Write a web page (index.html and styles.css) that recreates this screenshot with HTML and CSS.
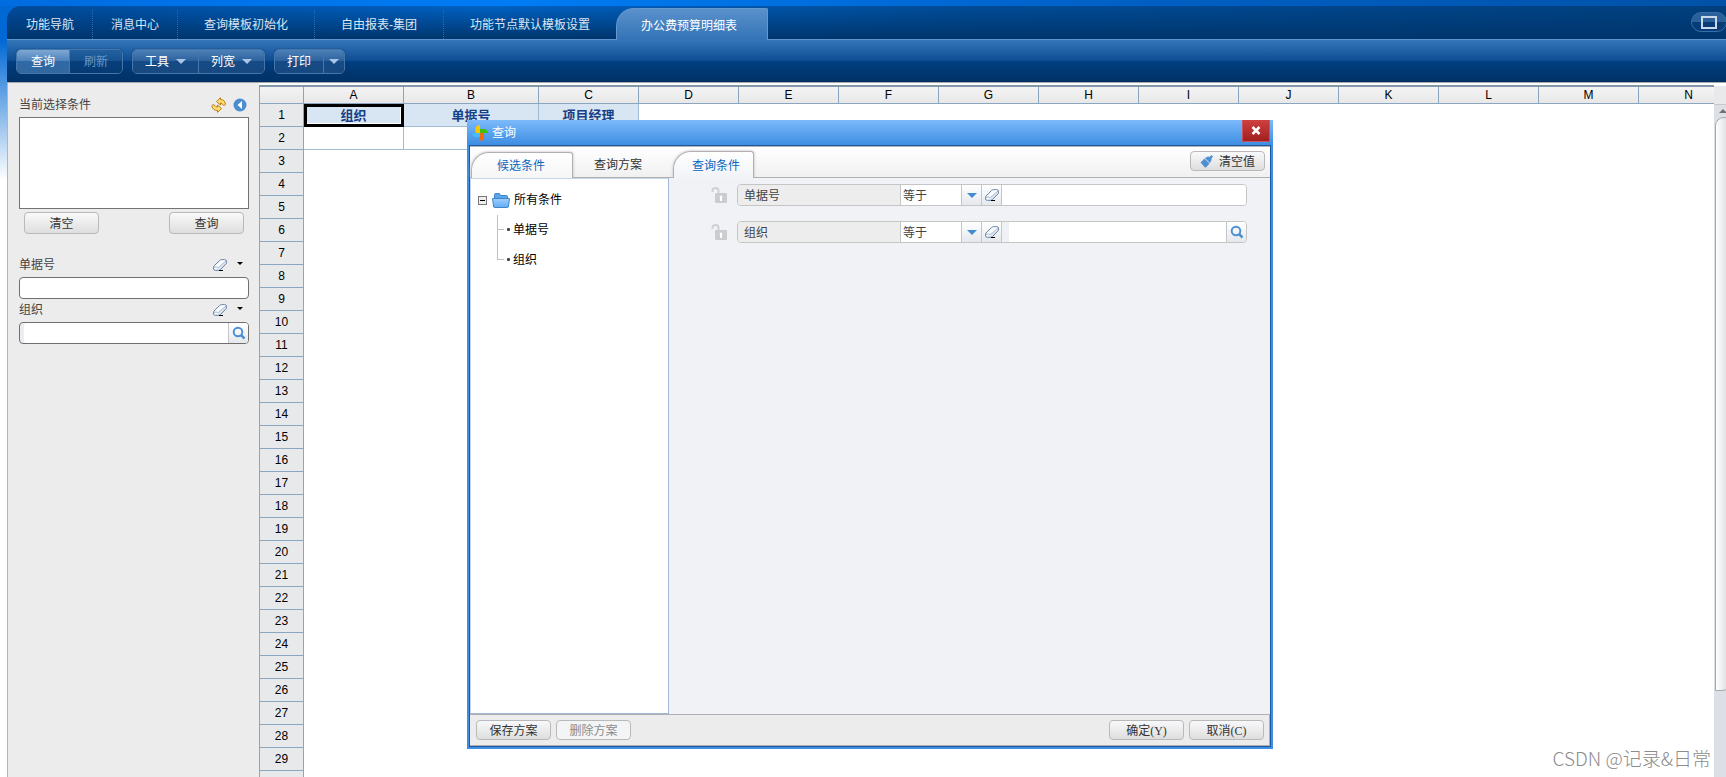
FILE: index.html
```html
<!DOCTYPE html>
<html lang="zh-CN">
<head>
<meta charset="utf-8">
<title>办公费预算明细表</title>
<link rel="stylesheet" href="styles.css">
</head>
<body>
<svg class="defs" aria-hidden="true">
  <defs>
    <linearGradient id="folder-fill" x1="0" y1="0" x2="0" y2="1"><stop offset="0" stop-color="#9fcfff"/><stop offset="1" stop-color="#62acf5"/></linearGradient>
    <linearGradient id="eraser-fill" x1="0" y1="0" x2="1" y2="1"><stop offset="0" stop-color="#c3d3e8"/><stop offset=".45" stop-color="#fff"/><stop offset="1" stop-color="#9db2cd"/></linearGradient>
    <symbol id="eraser" viewBox="0 0 14 12">
      <path d="M1 7 6.500 1.500Q7.500.6 8.500.6H11.500Q13.400.6 13.400 2V4.500L7.500 10.500Q6.500 11.400 5.500 11.400H2.500Q.6 11.400.6 10V8Z" fill="url(#eraser-fill)" stroke="#6c86a8"/>
      <path d="M1 8.500Q3 7.500 5.500 8.500L13 2" fill="none" stroke="#a9bcd6"/>
      <path d="M6 11.500H10" stroke="#000"/>
    </symbol>
    <symbol id="search" viewBox="0 0 14 14">
      <circle cx="6" cy="6" r="4.300" fill="none" stroke="#4f90d3" stroke-width="2"/>
      <path d="M9 9 12.500 12.500" stroke="#4f90d3" stroke-width="2.500"/>
    </symbol>
    <symbol id="lock" viewBox="0 0 16 16">
      <path d="M1.500 5V3.500A3 2.500 0 0 1 7.500 3.500V6" fill="none" stroke="#d0d1d2" stroke-width="2"/>
      <rect x="4" y="6" width="12" height="10" rx="1" fill="#cbcccd"/>
      <path d="M10 8.500a1.500 1.500 0 0 1 1 2.500V14H9V11A1.500 1.500 0 0 1 10 8.500Z" fill="#fff"/>
    </symbol>
  </defs>
</svg>
<div class="app">
  <nav class="tabs">
    <a class="tab" href="#">功能导航</a>
    <a class="tab" href="#">消息中心</a>
    <a class="tab tab-wide" href="#">查询模板初始化</a>
    <a class="tab tab-wide" href="#">自由报表-集团</a>
    <a class="tab tab-wide tab-last" href="#">功能节点默认模板设置</a>
    <a class="tab tab-active" href="#">办公费预算明细表</a>
    <button class="max-btn" aria-label="最大化"></button>
  </nav>
  <div class="toolbar">
    <div class="btn-group">
      <button class="tool tool-primary">查询</button>
      <button class="tool tool-primary" disabled>刷新</button>
    </div>
    <div class="btn-group">
      <button class="tool">工具<i class="caret"></i></button>
      <button class="tool">列宽<i class="caret"></i></button>
    </div>
    <div class="btn-group">
      <button class="tool">打印</button>
      <button class="tool tool-caret" aria-label="更多打印"><i class="caret"></i></button>
    </div>
  </div>
  <div class="main">
    <aside class="sidebar">
      <div class="side-head">
        <label for="current">当前选择条件</label>
        <svg width="16" height="16" viewBox="0 0 16 16"><g fill="#ffdc70" stroke="#bd7f1c" stroke-linejoin="round"><path d="M5.500 4.500 9.500.7V2.500Q14 2.500 14.500 7.500L13 8.500 11.500 7.500Q11.500 6 9.500 6V8Z"/><path d="M10.500 11.500 6.500 15.300V13.500Q2 13.500.8 9L2 7.500 4 8.500Q4.500 10 6.500 10V8Z"/></g></svg>
        <svg width="14" height="14" viewBox="0 0 14 14"><circle cx="7" cy="7" r="6.500" fill="#4c8dd0"/><path d="M9 3V11L4.500 7Z" fill="#fff"/></svg>
      </div>
      <textarea id="current" class="current"></textarea>
      <div class="side-actions">
        <button class="btn btn-side">清空</button>
        <button class="btn btn-side">查询</button>
      </div>
      <div class="field">
        <label for="doc-no">单据号</label>
        <svg width="14" height="12"><use href="#eraser"/></svg>
        <i class="mini-caret"></i>
      </div>
      <div class="box"><input id="doc-no" type="text"></div>
      <div class="field">
        <label for="org">组织</label>
        <svg width="14" height="12"><use href="#eraser"/></svg>
        <i class="mini-caret"></i>
      </div>
      <div class="box box-search"><input id="org" type="text"><button class="cell" aria-label="搜索"><svg width="14" height="14"><use href="#search"/></svg></button></div>
    </aside>
    <div class="sheet">
      <div class="sheet-view">
        <table class="grid">
          <colgroup><col class="c-head"><col><col class="c-b"><col><col><col><col><col><col><col><col><col><col><col><col></colgroup>
          <thead><tr><th></th><th>A</th><th>B</th><th>C</th><th>D</th><th>E</th><th>F</th><th>G</th><th>H</th><th>I</th><th>J</th><th>K</th><th>L</th><th>M</th><th>N</th></tr></thead>
          <tbody>
            <tr><th>1</th><td class="title selected">组织</td><td class="title">单据号</td><td class="title">项目经理</td></tr>
            <tr><th>2</th><td class="used"></td><td class="used"></td><td class="used"></td></tr>
            <tr><th>3</th></tr><tr><th>4</th></tr><tr><th>5</th></tr><tr><th>6</th></tr><tr><th>7</th></tr><tr><th>8</th></tr><tr><th>9</th></tr><tr><th>10</th></tr>
            <tr><th>11</th></tr><tr><th>12</th></tr><tr><th>13</th></tr><tr><th>14</th></tr><tr><th>15</th></tr><tr><th>16</th></tr><tr><th>17</th></tr><tr><th>18</th></tr><tr><th>19</th></tr><tr><th>20</th></tr>
            <tr><th>21</th></tr><tr><th>22</th></tr><tr><th>23</th></tr><tr><th>24</th></tr><tr><th>25</th></tr><tr><th>26</th></tr><tr><th>27</th></tr><tr><th>28</th></tr><tr><th>29</th></tr><tr><th></th></tr>
          </tbody>
        </table>
      </div>
      <div class="scroll">
        <div class="scroll-corner"></div>
        <div class="scroll-up"><i></i></div>
        <div class="scroll-track"><div class="thumb"></div></div>
      </div>
    </div>
  </div>
</div>

<section class="dialog" role="dialog" aria-labelledby="dlg-title">
  <header class="dlg-title">
    <svg width="16" height="16" viewBox="0 0 16 16"><path d="M3.500 8V3Q4 .5 8 0V8Z" fill="#fbc600"/><path d="M8 4H13Q15.500 5 16 8H8Z" fill="#3cc00a"/><path d="M8 8H12V13Q11 15.500 8 16Z" fill="#f26a0b"/><path d="M0 8H8V12H3Q.5 11.500 0 8Z" fill="#46bcff"/></svg>
    <span id="dlg-title">查询</span>
    <button class="close" aria-label="关闭"><svg width="10" height="9" viewBox="0 0 10 9"><path d="M1.500 1 8.500 8M8.500 1 1.500 8" stroke="#fff" stroke-width="2.500"/></svg></button>
  </header>
  <div class="dlg-frame">
    <div class="dlg-tabs">
      <button class="dtab dtab-on">候选条件</button>
      <button class="dtab">查询方案</button>
      <button class="dtab dtab-on dtab-right">查询条件</button>
      <button class="btn btn-clear"><svg width="13" height="13" viewBox="0 0 13 13"><path d="M.5 7.500 4.500 3.500 9.500 8.500 6 12.500H5Z" fill="#4d8fd3"/><path d="M5 3 8 1.500 9.500 2 11.500 0 13 1.500 11.500 3.500V5L10 8Z" fill="#4d8fd3"/></svg>清空值</button>
    </div>
    <div class="dlg-body">
      <div class="tree">
        <div class="node root"><i class="toggle"></i>
          <svg width="18" height="15" viewBox="0 0 18 15"><path d="M2.500 7V1.500Q2.500.5 3.500.5H7.500L8.500 2.500H14.500Q15.500 2.500 15.500 3.500V7" fill="#5ba5e8" stroke="#3d86ca"/><path d="M.5 5.500H17.500L16.500 13Q16.500 14.500 15.500 14.500H2.500Q1.500 14.500 1.500 13Z" fill="url(#folder-fill)" stroke="#3d86ca"/></svg>
          <span>所有条件</span></div>
        <div class="branch">
          <div class="node leaf">单据号</div>
          <div class="node leaf leaf-last">组织</div>
        </div>
      </div>
      <div class="conds">
        <div class="cond">
          <svg width="16" height="16"><use href="#lock"/></svg>
          <div class="cond-box">
            <label class="cond-name" for="v1">单据号</label>
            <select class="op" aria-label="单据号比较"><option>等于</option></select>
            <span class="cell"><i class="down"></i></span>
            <button class="cell" aria-label="清除"><svg width="14" height="12"><use href="#eraser"/></svg></button>
            <input id="v1" type="text" class="value">
          </div>
        </div>
        <div class="cond">
          <svg width="16" height="16"><use href="#lock"/></svg>
          <div class="cond-box">
            <label class="cond-name" for="v2">组织</label>
            <select class="op" aria-label="组织比较"><option>等于</option></select>
            <span class="cell"><i class="down"></i></span>
            <button class="cell" aria-label="清除"><svg width="14" height="12"><use href="#eraser"/></svg></button>
            <input id="v2" type="text" class="value value-ref">
            <button class="cell" aria-label="搜索"><svg width="14" height="14"><use href="#search"/></svg></button>
          </div>
        </div>
      </div>
    </div>
    <footer class="dlg-foot">
      <button class="btn">保存方案</button>
      <button class="btn" disabled>删除方案</button>
      <button class="btn btn-ok">确定<span class="key">(Y)</span></button>
      <button class="btn">取消<span class="key">(C)</span></button>
    </footer>
  </div>
</section>
<div class="watermark">CSDN @记录&amp;日常</div>
</body>
</html>
```

FILE: styles.css
```css
* { box-sizing: border-box; }
body {
  margin: 0;
  height: 100vh;
  overflow: hidden;
  position: relative;
  background: linear-gradient(rgba(255,255,255,0) 40px, #fff 180px), linear-gradient(90deg, #0068d4, #007cf5 30%, #0056ad 75%, #0052a8);
  font: 12px/16px "Liberation Sans", "Noto Sans CJK SC", sans-serif;
  color: #444;
}
button, input, textarea, select { font: inherit; color: inherit; margin: 0; padding: 0; border: 0; background: none; outline: 0; }
svg { display: block; flex: none; }
.defs { position: absolute; width: 0; height: 0; }
body::before { content: ""; display: block; height: 6px; background: linear-gradient(90deg, #006ce0, #007cf5 30%, #0060c6 65%, #0052a8); }

.app { height: calc(100vh - 6px); margin-left: 7px; display: flex; flex-direction: column; }
.tabs {
  flex: none; height: 34px; padding-left: 1px; display: flex; align-items: flex-end;
  border-top-left-radius: 14px;
  border-bottom: 1px solid #5b96d2;
  background: linear-gradient(rgba(0,48,100,0), #00356c), linear-gradient(90deg, #004b9c, #0062c4 28%, #004c98 55%, #003f7e);
}
.tab { flex: none; padding: 0 18px; height: 29px; line-height: 30px; color: #dbe6f2; text-decoration: none; border-right: 1px dotted #2d6cb0; }
.tab-wide { padding: 0 26px; }
.tab-last { border-right: 0; }
.tab-active {
  height: 32px; line-height: 34px; padding: 0 30px 0 24px; margin-bottom: -1px;
  color: #fff; border: 1px solid #6299d1; border-bottom: 0; border-radius: 18px 2px 0 0;
  background: linear-gradient(#5a91cb, #3373b6);
}
.max-btn { margin: 0 -1px 7px auto; width: 36px; height: 20px; border: 1px solid #366fa9; border-radius: 10px; background: linear-gradient(#2b609a 50%, #073c76 50%); display: flex; align-items: center; justify-content: center; }
.max-btn::before { content: ""; width: 12px; height: 9px; border: 2px solid #c9d8e8; }

.toolbar {
  flex: none; height: 42px; padding: 9px 9px 8px; display: flex; gap: 9px;
  background: linear-gradient(#3475b8, #0d4c92 50%, #003f81 50%, #003164);
}
.btn-group { display: flex; border: 1px solid #4677ab; border-radius: 5px; overflow: hidden; height: 25px; box-shadow: 0 0 1px #00244e; }
.tool { display: flex; align-items: center; gap: 7px; padding: 0 12px; color: #fff; background: linear-gradient(#4c80b7, #2b609c 50%, #154b87 50%, #18497f); }
.tool + .tool { border-left: 1px solid #4677ab; }
.tool-primary { padding: 0 14px; background: linear-gradient(#7fa8d4, #4b80b9 50%, #2f69a6 50%, #33689f); }
.tool:disabled { color: #6c96c2; background: linear-gradient(#22609f, #15518f 50%, #063f7c 50%, #063b72); }
.tool-caret { padding: 0 5px; }
.caret { border: 5px solid transparent; border-top-color: #a9c6e6; border-bottom: 0; }

.main { flex: 1; min-height: 0; display: flex; border-top: 1px solid #a9a9a9; background: #fff; }
.sidebar { flex: none; width: 252px; padding: 12px 10px 0 11px; background: #ececec; border-left: 1px solid #b3b5b8; }
.side-head { display: flex; align-items: center; gap: 6px; height: 20px; padding-right: 2px; }
.side-head label, .field label { flex: 1; }
.current { display: block; width: 100%; height: 92px; margin-top: 2px; border: 1px solid #737373; background: #fff; resize: none; }
.side-actions { display: flex; justify-content: space-between; padding: 3px 5px 0; }
.btn { width: 75px; height: 20px; padding-top: 1px; color: #333; border: 1px solid #b9b9b9; border-radius: 4px; background: linear-gradient(#f8f9fb, #e9e9e9 60%, #dedede); white-space: nowrap; }
.btn-side { height: 22px; padding-top: 2px; }
.field { display: flex; align-items: center; height: 23px; padding: 0 6px 2px 0; }
.side-actions + .field { margin-top: 20px; }
.field svg { margin-right: 10px; }
.mini-caret { margin-bottom: 2px; border: 3px solid transparent; border-top-color: #000; border-bottom: 0; }
.box { display: flex; height: 22px; border: 1px solid #6f6f6f; border-radius: 4px; background: #fff; overflow: hidden; }
.box input { flex: 1; min-width: 0; padding: 0 4px; }
.box-search { box-shadow: inset 4px 0 #ebedf3; }
.cell { flex: none; width: 20px; display: flex; align-items: center; justify-content: center; border-left: 1px solid #c4c6c9; background: linear-gradient(#fff, #e5e8ec); }

.sheet { flex: 1; min-width: 0; display: flex; padding-top: 2px; }
.sheet-view { flex: 1; min-width: 0; overflow: hidden; border-top: 2px solid #8298aa; }
.grid { table-layout: fixed; width: 1480px; border-collapse: separate; border-spacing: 0; color: #000; }
.grid col { width: 100px; }
.grid .c-head { width: 45px; }
.grid .c-b { width: 135px; }
.grid th { height: 23px; padding: 0; font-weight: normal; text-align: center; background: #e8e9eb; border: 1px solid #8aa6c1; border-width: 0 1px 1px 0; }
.grid th:first-child { border-left-width: 1px; }
.grid thead th { height: 17px; line-height: 14px; background: linear-gradient(#f4f4f4, #e8e8e8); }
.grid td { padding: 0; border: 1px solid #a3bad3; border-width: 0 1px 1px 0; text-align: center; }
.grid .title { padding-top: 2px; background: #d8e5f2; color: #163f87; font-size: 13px; font-weight: bold; }
.grid .selected { outline: 3px solid #000; outline-offset: -3px; box-shadow: inset 0 0 0 3px #fff; }
.scroll { flex: none; width: 12px; margin-top: 1px; display: flex; flex-direction: column; background: #dce0e6; overflow: hidden; }
.scroll-corner { height: 19px; flex: none; background: #e9e9eb; border-bottom: 1px solid #c7c8cd; }
.scroll-up { height: 12px; flex: none; padding: 4px 0 0 5px; }
.scroll-up i { display: block; width: 0; border: 4px solid transparent; border-bottom-color: #707070; border-top: 0; }
.scroll-track { flex: 1; }
.thumb { width: 16px; height: 87%; margin-left: 1px; border: 1px solid #a5a8ae; border-radius: 10px 8px 10px 0; background: linear-gradient(90deg, #fff, #d6d8da); }

.dialog { position: absolute; left: 467px; top: 120px; width: 806px; height: 629px; display: flex; flex-direction: column; padding: 0 2px 2px; background: #3d8ee5; color: #333; }
.dlg-title { flex: none; height: 25px; margin: 0 -2px; padding: 0 3px 0 5px; display: flex; align-items: center; gap: 4px; color: #fff; background: linear-gradient(#7cbafb, #3d8de2); }
.close { align-self: flex-start; margin-left: auto; width: 28px; height: 22px; display: flex; align-items: center; justify-content: center; background: linear-gradient(#d04040, #a11f1f); border: 1px solid #c65561; border-top: 0; }
.dlg-frame { flex: 1; min-height: 0; display: flex; flex-direction: column; border: 1px solid #20599b; }
.dlg-tabs { flex: none; height: 32px; padding-left: 1px; display: flex; align-items: flex-end; background: linear-gradient(#fff, #f0f0f0); border-top: 1px solid #aeb3b8; border-bottom: 1px solid #b0b0b0; }
.dtab { height: 26px; padding: 2px 21px 0; }
.dtab-on { margin-bottom: -1px; padding: 0 27px 0 25px; color: #0a67bd; background: linear-gradient(#fff, #f6f6f6); border: 1px solid #b0b0b0; border-bottom: 0; border-radius: 18px 3px 0 0; box-shadow: 0 0 3px #bbb; clip-path: inset(-3px -3px 0 -3px); }
.dtab-right { margin-left: 10px; height: 27px; padding: 1px 13px 0 18px; background: linear-gradient(#fff, #f1f3f7); }
.btn-clear { margin: 0 5px 6px auto; display: flex; align-items: center; justify-content: center; gap: 6px; }
.dlg-body { flex: 1; min-height: 0; display: flex; background: #f0f2f6; }
.tree { flex: none; width: 199px; padding: 6px 7px; background: #fff; color: #000; border: 1px solid #9fb7d5; border-left-color: #c6d6ea; border-top-color: #c6d6ea; }
.node { display: flex; align-items: center; height: 30px; }
.toggle { width: 9px; height: 9px; margin-right: 5px; border: 1px solid #777; background: linear-gradient(#000, #000) center / 5px 1px no-repeat #eee; }
.root span { margin-left: 4px; }
.branch { margin-left: 19px; }
.leaf { position: relative; padding-left: 16px; }
.leaf::before { content: ""; position: absolute; left: 0; top: 0; width: 6px; height: 100%; border-left: 1px solid #c0c0c0; background: linear-gradient(#c0c0c0, #c0c0c0) 0 14px / 6px 1px no-repeat; }
.leaf-last::before { height: 15px; }
.leaf::after { content: ""; position: absolute; left: 10px; top: 13px; width: 3px; height: 3px; border-radius: 1px; background: #444; }
.conds { flex: 1; min-width: 0; padding: 6px 23px 0 42px; display: flex; flex-direction: column; gap: 15px; }
.cond { display: flex; align-items: center; gap: 10px; }
.cond-box { flex: 1; min-width: 0; height: 22px; display: flex; border: 1px solid #c5c5c6; border-radius: 4px; overflow: hidden; color: #444; }
.cond-name { width: 162px; padding-left: 6px; line-height: 23px; background: #ededee; }
.op { width: 61px; padding: 2px 0 0 2px; border-left: 1px solid #c4c6c9; background: #fff; appearance: none; }
.down { border: 5px solid transparent; border-top-color: #438bd1; border-bottom: 0; }
.value { flex: 1; min-width: 0; padding: 0 4px; background: #fff; border-left: 1px solid #c4c6c9; }
.value-ref { box-shadow: inset 7px 0 #f0f1f5; }
.dlg-foot { flex: none; height: 32px; padding: 5px 5px 5px 6px; display: flex; gap: 5px; background: #ececec; border: 1px solid #afafb2; border-width: 1px 1px 1px 0; }
.btn:disabled { color: #8b8b8b; background: #f3f4f5; }
.btn-ok { margin-left: auto; }
.key { font-family: "Liberation Serif", serif; }
.watermark { position: absolute; right: 15px; bottom: 6px; font: 19px/26px "Noto Sans CJK SC", sans-serif; font-weight: 300; color: #8c8c8c; }
```
